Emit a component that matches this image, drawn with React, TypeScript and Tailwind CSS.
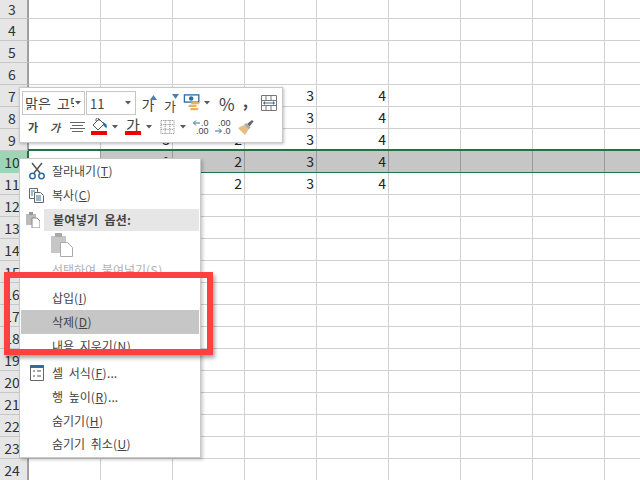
const font = { fontFamily: '"Noto Sans CJK KR", "Noto Sans", sans-serif' };

const colW = [72, 72, 72, 72, 72, 72, 72, 72, 72];
const rows: { n: number; h: number; cells?: Record<number, string> }[] = [
  { n: 3, h: 19 }, { n: 4, h: 22 }, { n: 5, h: 22 }, { n: 6, h: 22 },
  { n: 7, h: 22, cells: { 3: "3", 4: "4" } },
  { n: 8, h: 22, cells: { 3: "3", 4: "4" } },
  { n: 9, h: 22, cells: { 1: "3", 2: "2", 3: "3", 4: "4" } },
  { n: 10, h: 22, cells: { 1: "1", 2: "2", 3: "3", 4: "4" } },
  { n: 11, h: 22, cells: { 2: "2", 3: "3", 4: "4" } },
  ...[12, 13, 14, 15, 16, 17, 18, 19, 20, 21, 22, 23, 24].map((n) => ({ n, h: 22 })),
];

function Row({ n, h, cells }: { n: number; h: number; cells?: Record<number, string> }) {
  const sel = n === 10;
  return (
    <div className="flex shrink-0 relative" style={{ height: h }}>
      <div
        className={`w-[29px] shrink-0 flex items-center justify-center pr-[3px] leading-none text-[14px] text-[#333] border-b border-r-2 ${
          sel ? "bg-[#9fd5b7] border-b-[#9fd5b7] border-r-[#217346]" : "bg-[#e6e6e6] border-b-[#c6c6c6] border-r-[#a0a0a0]"
        }`}
      >
        {n}
      </div>
      {colW.map((w, i) => (
        <div
          key={i}
          className={`shrink-0 flex items-center justify-end pr-[2px] pb-[2px] leading-none text-[14px] text-[#222] border-b border-r ${
            sel
              ? i === 0
                ? "bg-white border-b-transparent border-r-[#9a9a9a]"
                : "bg-[#c6c6c6] border-b-white border-r-[#9a9a9a]"
              : "bg-white border-b-[#d0d0d0] border-r-[#d0d0d0]"
          }`}
          style={{ width: w }}
        >
          {cells?.[i] ?? ""}
        </div>
      ))}
      {sel && (
        <>
          <div className="absolute left-[28px] right-0 top-[-2px] h-[2px] bg-[#217346]" />
          <div className="absolute left-[28px] right-0 bottom-[-1px] h-[2px] bg-[#217346]" />
        </>
      )}
    </div>
  );
}

function Caret({ className = "" }: { className?: string }) {
  return (
    <svg width="6" height="4" viewBox="0 0 6 4" className={`shrink-0 ${className}`}>
      <path d="M0 0h6L3 3.500z" fill="#5a5a5a" />
    </svg>
  );
}

function Ga({ className = "" }: { className?: string }) {
  return <span className={`leading-none text-[#444] ${className}`}>가</span>;
}

const smallNum = "block h-[8px] leading-[8px] text-[9px]";

function Toolbar() {
  return (
    <div
      className="absolute left-[19px] top-[87px] w-[264px] h-[56px] bg-white border border-[#c8c8c8] shadow-[1px_1px_3px_rgba(0,0,0,0.25)] pl-[2px] pt-[3px]"
      style={font}
    >
      <div className="flex items-center h-[24px]">
        <div className="w-[63px] h-[24px] shrink-0 border border-[#c6c6c6] flex items-center pl-[2px] text-[14px] leading-none text-[#444] overflow-hidden whitespace-nowrap">
          <span className="w-[49px] overflow-hidden [word-spacing:3px]">맑은 고딕</span>
          <Caret className="ml-[1px]" />
        </div>
        <div className="w-[50px] h-[24px] shrink-0 border border-[#c6c6c6] flex items-center justify-between pl-[3px] pr-[4px] text-[13px] leading-none text-[#444] ml-[1px]">
          <span>11</span>
          <Caret />
        </div>
        <div className="w-[22px] shrink-0 ml-[1px] mt-[2px] flex justify-center relative">
          <Ga className="text-[14px]" />
          <svg width="7" height="6" viewBox="0 0 7 6" className="absolute top-[-2px] left-[13px]">
            <path d="M0 5L3.500 0 7 5z" fill="#4a80b5" />
          </svg>
        </div>
        <div className="w-[22px] shrink-0 mt-[4px] flex justify-center relative">
          <Ga className="text-[13px]" />
          <svg width="7" height="5" viewBox="0 0 7 5" className="absolute top-[-5px] left-[13px]">
            <path d="M0 0h7L3.500 5z" fill="#4a80b5" />
          </svg>
        </div>
        <svg width="19" height="18" viewBox="0 0 19 20" className="ml-[2px] shrink-0">
          <rect x="0.500" y="1" width="16" height="8" fill="#fff" stroke="#2f6ea5" strokeWidth="1.500" />
          <circle cx="8" cy="5" r="2.500" fill="#2f6ea5" />
          <rect x="8" y="9" width="9" height="2.500" rx="1" fill="#e8b25f" />
          <rect x="5" y="12" width="9" height="2.500" rx="1" fill="#e8b25f" />
          <rect x="7" y="15.500" width="9" height="2.500" rx="1" fill="#e8b25f" />
        </svg>
        <Caret className="ml-[2px]" />
        <span className="ml-[9px] w-[18px] shrink-0 text-[17px] leading-none text-[#444]">%</span>
        <span className="ml-[6px] w-[8px] shrink-0 text-[15px] font-bold leading-none text-[#444] -mt-[6px]">,</span>
        <svg width="17" height="17" viewBox="0 0 17 17" className="ml-[10px] shrink-0">
          <path d="M.5.500h15v15H.500zM.5 5.500h15M.5 10.500h15M5 .500v5M10 .500v5M5 10.500v5M10 10.500v5" fill="none" stroke="#777" />
          <path d="M3 8h10" stroke="#2f6ea5" />
          <path d="M2 8l2-2v4zM14 8l-2-2v4z" fill="#2f6ea5" />
        </svg>
      </div>
      <div className="flex items-center h-[22px] mt-[1px]">
        <div className="w-[22px] shrink-0 flex justify-center">
          <span className="text-[11px] font-bold leading-none text-[#444]">가</span>
        </div>
        <div className="w-[22px] shrink-0 flex justify-center">
          <span className="text-[11px] font-bold italic leading-none text-[#555]">가</span>
        </div>
        <svg width="15" height="11" viewBox="0 0 15 11" className="ml-[4px] shrink-0">
          <path d="M0 .500h15M2 3.500h11M0 6.500h15M2 9.500h11" stroke="#666" />
        </svg>
        <div className="relative w-[16px] h-[20px] ml-[6px] shrink-0">
          <svg width="17" height="14" viewBox="0 0 17 14" className="absolute top-[1px] left-0">
            <path d="M8 1L2 7l5 5 6-6z" fill="#fff" stroke="#555" />
            <path d="M5 3V1.500a1.500 1.500 0 013 0V3" fill="none" stroke="#555" />
            <path d="M12 4l3 2c1 1 1 3 .5 4-1 0-2-1.500-3.500-3z" fill="#2f6ea5" />
          </svg>
          <div className="absolute left-0 bottom-[2px] w-[16px] h-[4px] bg-[#f00000]" />
        </div>
        <Caret className="ml-[5px]" />
        <div className="relative w-[16px] h-[20px] ml-[7px] shrink-0 flex justify-center items-start">
          <Ga className="text-[15px]" />
          <div className="absolute left-0 bottom-[2px] w-[16px] h-[4px] bg-[#f00000]" />
        </div>
        <Caret className="ml-[5px]" />
        <svg width="15" height="14" viewBox="0 0 15 15" className="ml-[8px] shrink-0">
          <path d="M.5.500h14v14H.500zM5 .500v14M10 .500v14M.5 5h14M.5 10h14" fill="none" stroke="#777" strokeDasharray="1 1" />
        </svg>
        <Caret className="ml-[5px]" />
        <div className="ml-[7px] w-[16px] h-[16px] shrink-0 text-[#444] relative" style={{ fontFamily: '"Liberation Sans", sans-serif' }}>
          <span className={`${smallNum} pl-[8px]`}>.0</span>
          <span className={`${smallNum} pl-[3px]`}>.00</span>
          <svg width="7" height="6" viewBox="0 0 7 6" className="absolute left-0 top-[1px]">
            <path d="M7 3H1M3 .500L.5 3 3 5.500" fill="none" stroke="#2f6ea5" />
          </svg>
        </div>
        <div className="ml-[6px] w-[16px] h-[16px] shrink-0 text-[#444] relative" style={{ fontFamily: '"Liberation Sans", sans-serif' }}>
          <span className={`${smallNum} pl-[3px]`}>.00</span>
          <span className={`${smallNum} pl-[8px]`}>.0</span>
          <svg width="7" height="6" viewBox="0 0 7 6" className="absolute left-0 top-[9px]">
            <path d="M0 3h6M4 .500L6.500 3 4 5.500" fill="none" stroke="#2f6ea5" />
          </svg>
        </div>
        <svg width="17" height="17" viewBox="0 0 17 17" className="ml-[6px] shrink-0">
          <path d="M10 5l5-4 1.500 1.500-4 5z" fill="#666" />
          <path d="M9 4l4.500 4.500-2 2L7 6z" fill="#aaa" />
          <path d="M7 6l4.500 4.500L8 16 1 9z" fill="#e6bd80" />
        </svg>
      </div>
    </div>
  );
}

function MenuItem({ label, icon, hl, dim, h = 24 }: { label: React.ReactNode; icon?: React.ReactNode; hl?: boolean; dim?: boolean; h?: number }) {
  return (
    <div className={`flex items-center shrink-0 mx-px text-[12px] leading-none [word-spacing:3px] ${hl ? "bg-[#c6c6c6]" : ""} ${dim ? "text-[#b0b0b0]" : "text-[#444]"}`} style={{ height: h }}>
      <div className="w-[31px] shrink-0 flex justify-center">{icon}</div>
      <span className="whitespace-nowrap">{label}</span>
    </div>
  );
}

function U({ c }: { c: string }) {
  return <span className="tracking-[0.5px]">(<span className="underline">{c}</span>)</span>;
}

function Menu() {
  return (
    <div
      className="absolute left-[19px] top-[158px] w-[182px] h-[300px] bg-white border border-[#c8c8c8] shadow-[2px_2px_3px_rgba(0,0,0,0.2)] flex flex-col"
      style={font}
    >
      <MenuItem
        label={<>잘라내기<U c="T" /></>}
        icon={
          <svg width="16" height="18" viewBox="0 0 16 18">
            <path d="M3 1l8 10M13 1L5 11" stroke="#555" strokeWidth="1.500" fill="none" />
            <circle cx="3.500" cy="14" r="2.700" fill="none" stroke="#2f6ea5" strokeWidth="1.500" />
            <circle cx="12.500" cy="14" r="2.700" fill="none" stroke="#2f6ea5" strokeWidth="1.500" />
          </svg>
        }
      />
      <MenuItem
        label={<>복사<U c="C" /></>}
        icon={
          <svg width="16" height="15" viewBox="0 0 16 15">
            <path d="M.5.500h8v10h-8z" fill="#fff" stroke="#666" />
            <path d="M5.500 4.500h6l3 3v7h-9z" fill="#fff" stroke="#666" />
            <path d="M2 3h4M2 5h2M2 7h2M7 8h5M7 10h5M7 12h5" stroke="#2f6ea5" />
          </svg>
        }
      />
      <div className="flex items-center mx-px mt-[2px] h-[22px] shrink-0">
        <div className="w-[23px] shrink-0 flex justify-center">
          <svg width="14" height="16" viewBox="0 0 14 16">
            <path d="M0 2h10v11H0z" fill="#bbb" />
            <path d="M3 0h4v3H3z" fill="#999" />
            <path d="M6 6h5l3 3v7H6z" fill="#fff" stroke="#888" />
          </svg>
        </div>
        <div className="flex-1 h-full bg-[#e6e6e6] flex items-center pl-[9px] text-[12px] leading-none font-bold tracking-[0.3px] [word-spacing:3px] text-[#444]">붙여넣기 옵션:</div>
      </div>
      <div className="h-[28px] shrink-0 pl-[31px] flex items-center">
        <svg width="22" height="24" viewBox="0 0 22 24">
          <path d="M0 3h15v17H0z" fill="#c6c6c6" />
          <path d="M4 0h7v4H4z" fill="#aaa" />
          <path d="M9.500 9.500h7l5 5v9h-12z" fill="#fff" stroke="#aaa" />
        </svg>
      </div>
      <MenuItem h={22} dim label={<>선택하여 붙여넣기<U c="S" /></>} />
      <div className="h-[5px] shrink-0" />
      <MenuItem label={<>삽입<U c="I" /></>} />
      <MenuItem hl label={<>삭제<U c="D" /></>} />
      <MenuItem label={<>내용 지우기<U c="N" /></>} />
      <div className="h-[3px] shrink-0" />
      <MenuItem
        label={<>셀 서식<U c="F" />...</>}
        icon={
          <svg width="14" height="16" viewBox="0 0 14 16">
            <path d="M.5.500h13v15H.500z" fill="#fff" stroke="#666" />
            <path d="M0 0h14v3H0z" fill="#2f6ea5" />
            <path d="M3 6h2M3 11h2M7 6h4M7 11h4" stroke="#555" />
          </svg>
        }
      />
      <MenuItem label={<>행 높이<U c="R" />...</>} />
      <MenuItem h={23} label={<>숨기기<U c="H" /></>} />
      <MenuItem label={<>숨기기 취소<U c="U" /></>} />
    </div>
  );
}

export default function App() {
  return (
    <div className="relative w-[640px] h-[480px] overflow-hidden bg-white flex flex-col" style={font}>
      {rows.map((r) => (
        <Row key={r.n} {...r} />
      ))}
      <Toolbar />
      <Menu />
      <div className="absolute left-[4px] top-[272px] w-[209px] h-[83px] border-[6px] border-[#ff4040] shadow-[2px_3px_4px_rgba(0,0,0,0.35)]" />
    </div>
  );
}
